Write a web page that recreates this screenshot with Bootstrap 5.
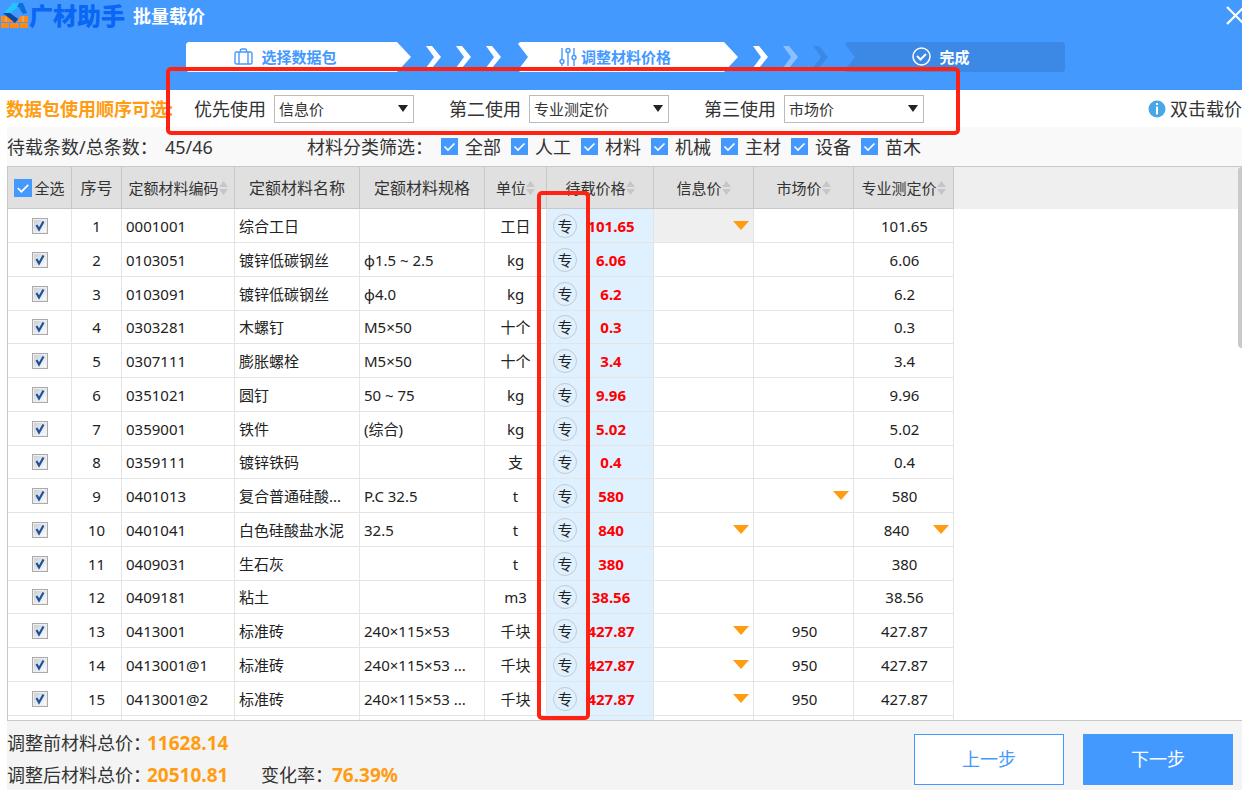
<!DOCTYPE html>
<html lang="zh-CN">
<head>
<meta charset="utf-8">
<meta name="viewport" content="width=device-width, initial-scale=1">
<title>广材助手 批量载价</title>
<link href="https://cdn.jsdelivr.net/npm/bootstrap@5.3.0/dist/css/bootstrap.min.css" rel="stylesheet">
<style>
  :root { --blue: #4499ff; --blue-dark: #3b88e5; --orange: #ff9c12; --rule: #c8c8c8; --cell: #e4e4e4; --mark-red: #ff2213; }
  body { font-family: "Noto Sans", "Noto Sans CJK SC", sans-serif; font-size: 18px; line-height: 24px; color: #333; background: #fff; }
  svg { display: block; flex: none; }

  .app-head { background: var(--blue); height: 90px; }
  .title-bar { height: 32px; padding-left: 1px; }
  .brand-name { color: #0a66f5; font-size: 24px; font-weight: 900; line-height: 28px; }
  .page-title { font-size: 18px; font-weight: 700; line-height: 30px; }
  .close-btn { width: 17px; height: 30px; }

  .steps { padding-left: 186px; margin-top: 10px; font-size: 15px; font-weight: 700; }
  .step { height: 30px; width: 220px; padding-right: 26px; background: #fff; color: var(--blue); }
  .step-first { width: 225px; clip-path: polygon(0 2px, 2px 0, 211px 0, 100% 50%, 211px 100%, 2px 100%, 0 28px); }
  .step-mid { clip-path: polygon(2px 0, 206px 0, 100% 50%, 206px 100%, 2px 100%, 0 28px, 10px 50%, 0 2px); }
  .step-last { padding-right: 28px; background: var(--blue-dark); color: #fff; clip-path: polygon(2px 0, 218px 0, 100% 2px, 100% 28px, 218px 100%, 2px 100%, 0 28px, 10px 50%, 0 2px); }
  .chevrons { width: 107px; gap: 14px; padding-right: 2px; }

  .order-bar { height: 37px; padding-left: 6px; }
  .order-title { width: 188px; color: var(--orange); font-weight: 700; white-space: nowrap; }
  .order-label { width: 80px; }
  .order-select { width: 140px; height: 28px; margin-right: 35px; padding: 0 24px 0 4px; font-size: 15px; line-height: 24px; color: #333; border: 1px solid #bbb; border-radius: 0;
    background: #fff url("data:image/svg+xml,%3Csvg xmlns='http://www.w3.org/2000/svg' viewBox='0 0 10 7'%3E%3Cpath d='M0 0h10L5 7z' fill='%23222'/%3E%3C/svg%3E") no-repeat right 5px top 9px / 10px 7px; }
  .filter-bar { height: 39px; margin-left: 7px; background: #f9f9f9; }
  .count-label { width: 158px; } .count-value { width: 142px; } .filter-label { width: 134px; }
  .filter-item { width: 70px; gap: 7px; white-space: nowrap; }
  .tick { appearance: none; flex: none; width: 17px; height: 17px; margin: 0; background: var(--blue); }
  .tick:checked { background: var(--blue) url("data:image/svg+xml,%3Csvg xmlns='http://www.w3.org/2000/svg' viewBox='0 0 17 17'%3E%3Cpath d='M3.500 8.500l3.500 3.500 6.500-6.500' fill='none' stroke='%23fff' stroke-width='1.600'/%3E%3C/svg%3E") center / 100%; }

  .outline-box { position: absolute; border: 4px solid var(--mark-red); border-radius: 5px; pointer-events: none; z-index: 3; }
  .order-outline { left: 166px; top: -23px; width: 794px; height: 68px; }
  .source-outline { left: 529px; top: 24px; width: 53px; bottom: 0; }

  .grid-area { margin-left: 7px; min-height: 0; border: solid var(--rule); border-width: 1px 0 1px 1px; overflow: hidden; }
  .price-grid { table-layout: fixed; width: 100%; border-collapse: separate; border-spacing: 0; font-size: 15px; line-height: 22px; color: #222; }
  .price-grid th { height: 42px; padding: 0; background: #e0e0e0; border-right: 1px solid var(--rule); border-bottom: 1px solid var(--rule); font-weight: 400; color: #333; text-align: center; white-space: nowrap; }
  .price-grid th.wide { font-size: 16px; }
  .price-grid td { height: 34px; padding: 0; border-right: 1px solid var(--cell); border-bottom: 1px solid var(--cell); text-align: center; white-space: nowrap; overflow: hidden; }
  .price-grid tr:nth-child(4n) td { height: 33px; }
  .price-grid .txt { text-align: left; padding-left: 4px; }
  .price-grid th.rest { background: #efefef; border: 0; }
  .price-grid td.rest { border: 0; }
  .price-grid .pending { background: #dff0ff; }
  .price-grid .active-cell { background: #efefef; }
  .price-num { color: #f00; font-weight: 700; padding-right: 8px; }
  .price-grid .assessed { padding-left: 2px; }
  .source-dot { width: 24px; height: 24px; margin-left: 6px; border: 1px solid #c4c9ce; border-radius: 50%; font-size: 15px; line-height: 22px; color: #222; }
  .row-tick { appearance: none; display: block; width: 16px; height: 16px; margin: 0 auto; border: 1px solid #aaa; box-shadow: inset 0 0 0 1px #eee; background: linear-gradient(135deg, #ccd0d6, #fff); }
  .row-tick:checked { background: url("data:image/svg+xml,%3Csvg xmlns='http://www.w3.org/2000/svg' viewBox='0 0 14 14'%3E%3Cpath d='M3.500 6l2.500 4.500 4.500-8' fill='none' stroke='%231c5299' stroke-width='2.200'/%3E%3C/svg%3E") center / 100%, linear-gradient(135deg, #c8ccd2, #fff); }
  .all-tick { width: 18px; height: 18px; margin-right: 2px; }
  .drop-btn { width: 16px; height: 22px; margin-right: 4px; }
  .scroll-thumb { position: absolute; right: 0; top: 0; width: 4px; height: 181px; background: #c9c9c9; border-radius: 4px 0 0 4px; }

  .foot { margin-left: 7px; height: 69px; padding: 10px 9px 0 0; background: #f4f4f4; }
  .sum-label { width: 140px; white-space: nowrap; }
  .sum-value { color: var(--orange); font-size: 19px; font-weight: 700; }
  .sum-first { width: 114px; } .rate-label { width: 71px; white-space: nowrap; }
  .foot-actions { gap: 19px; padding-top: 3px; }
  .step-btn { width: 150px; height: 51px; padding: 0; border: 1px solid var(--blue); border-radius: 0; font-size: 18px; }
  .btn-prev, .btn-prev:hover { background: #fff; color: var(--blue); }
  .btn-next, .btn-next:hover { background: var(--blue); color: #fff; }
</style>
</head>
<body class="d-flex flex-column vh-100 overflow-hidden">

<header class="app-head flex-shrink-0">
  <div class="title-bar d-flex align-items-center">
    <svg width="28" height="28" viewBox="0 0 28 28" aria-hidden="true">
      <path d="M0 14h7l6 6H0zM17 19l2-5h8v6H15zM0 21h8v5H0zM9 21h9v5H9zM19 21h8v5h-8z" fill="#ff8a14"/>
      <path d="M5 15v5M22 14v6" stroke="#cfc0a0" stroke-width="1" fill="none"/>
      <path d="M12 1h10L11 12H2z" fill="#21c8f7"/>
      <path d="M18 1h4l4 10-4 1-4-6-2-1z" fill="#0b6fe0"/>
      <path d="M17 5l2 1-8 7-3-1z" fill="#4499ff"/>
      <path d="M2 11h7l8 6-3 4z" fill="#0647a8"/>
    </svg>
    <span class="brand-name">广材助手</span>
    <h1 class="page-title text-white mb-0 ms-2">批量载价</h1>
    <button type="button" class="close-btn btn p-0 border-0 ms-auto overflow-hidden" aria-label="关闭">
      <svg width="20" height="20" viewBox="0 0 20 20"><path d="M2 1l17 17M19 1L2 18" stroke="#fff" stroke-width="2.200"/></svg>
    </button>
  </div>
  <ol class="steps d-flex align-items-center list-unstyled mb-0">
    <li class="step step-first d-flex align-items-center justify-content-center gap-2">
      <svg width="19" height="18" viewBox="0 0 19 18" fill="none" stroke="#4499ff" stroke-width="1.400"><rect x="1" y="4" width="17" height="12" rx="1.500"/><path d="M5 4v12M14 4v12M6.500 4V2Q6.500 1 8 1h3q1.500 0 1.500 1V4"/></svg>
      <span>选择数据包</span>
    </li>
    <li class="chevrons d-flex justify-content-center" aria-hidden="true">
      <svg width="16" height="22" viewBox="0 0 16 22"><path d="M0 0h6l9 11-9 11H0l8-11z" fill="#fff"/></svg>
      <svg width="16" height="22" viewBox="0 0 16 22"><path d="M0 0h6l9 11-9 11H0l8-11z" fill="#fff"/></svg>
      <svg width="16" height="22" viewBox="0 0 16 22"><path d="M0 0h6l9 11-9 11H0l8-11z" fill="#fff"/></svg>
    </li>
    <li class="step step-mid d-flex align-items-center justify-content-center gap-1">
      <svg width="18" height="20" viewBox="0 0 18 20" fill="none" stroke="#4499ff" stroke-width="1.400"><path d="M3 1v11M3 17v2M9 6v13M15 1v7M15 13v6"/><circle cx="3" cy="14.500" r="2"/><circle cx="9" cy="3.500" r="2"/><circle cx="15" cy="10.500" r="2"/></svg>
      <span>调整材料价格</span>
    </li>
    <li class="chevrons d-flex justify-content-center" aria-hidden="true">
      <svg width="16" height="22" viewBox="0 0 16 22"><path d="M0 0h6l9 11-9 11H0l8-11z" fill="#fff"/></svg>
      <svg width="16" height="22" viewBox="0 0 16 22"><path d="M0 0h6l9 11-9 11H0l8-11z" fill="#8cc0ff"/></svg>
      <svg width="16" height="22" viewBox="0 0 16 22"><path d="M0 0h6l9 11-9 11H0l8-11z" fill="#3b88e5"/></svg>
    </li>
    <li class="step step-last d-flex align-items-center justify-content-center gap-2">
      <svg width="19" height="20" viewBox="0 0 19 20" fill="none" stroke="#fff" stroke-width="1.500"><circle cx="9.500" cy="9.500" r="8.500"/><path d="M5 9l3.500 3.500L14 7" stroke-width="2"/></svg>
      <span>完成</span>
    </li>
  </ol>
</header>

<section class="order-bar position-relative d-flex align-items-center flex-shrink-0">
  <span class="order-title">数据包使用顺序可选:</span>
  <label class="order-label" for="first">优先使用</label>
  <select id="first" class="form-select order-select"><option>信息价</option><option>专业测定价</option><option>市场价</option></select>
  <label class="order-label" for="second">第二使用</label>
  <select id="second" class="form-select order-select"><option>专业测定价</option><option>信息价</option><option>市场价</option></select>
  <label class="order-label" for="third">第三使用</label>
  <select id="third" class="form-select order-select"><option>市场价</option><option>信息价</option><option>专业测定价</option></select>
  <span class="ms-auto d-flex align-items-center gap-1 text-nowrap">
    <svg width="18" height="18" viewBox="0 0 18 18"><circle cx="9" cy="9" r="8.500" fill="#49a6e8"/><path d="M9 3v2M9 6.500v8" stroke="#fff" stroke-width="2"/></svg>
    双击载价
  </span>
  <div class="outline-box order-outline"></div>
</section>

<section class="filter-bar d-flex align-items-center flex-shrink-0">
  <span class="count-label">待载条数/总条数：</span><span class="count-value">45/46</span>
  <span class="filter-label">材料分类筛选：</span>
  <label class="filter-item d-flex align-items-center"><input type="checkbox" class="tick" checked>全部</label>
  <label class="filter-item d-flex align-items-center"><input type="checkbox" class="tick" checked>人工</label>
  <label class="filter-item d-flex align-items-center"><input type="checkbox" class="tick" checked>材料</label>
  <label class="filter-item d-flex align-items-center"><input type="checkbox" class="tick" checked>机械</label>
  <label class="filter-item d-flex align-items-center"><input type="checkbox" class="tick" checked>主材</label>
  <label class="filter-item d-flex align-items-center"><input type="checkbox" class="tick" checked>设备</label>
  <label class="filter-item d-flex align-items-center"><input type="checkbox" class="tick" checked>苗木</label>
</section>

<main class="grid-area position-relative flex-grow-1">
  <table class="price-grid">
    <colgroup>
      <col width="64"><col width="50"><col width="113"><col width="125"><col width="125"><col width="62"><col width="107"><col width="100"><col width="100"><col width="100"><col>
    </colgroup>
    <thead>
      <tr>
        <th><label class="d-flex align-items-center justify-content-center"><input type="checkbox" class="tick all-tick" checked>全选</label></th>
        <th class="wide">序号</th>
        <th data-sort>定额材料编码</th>
        <th class="wide">定额材料名称</th>
        <th class="wide">定额材料规格</th>
        <th data-sort>单位</th>
        <th data-sort>待载价格</th>
        <th data-sort>信息价</th>
        <th data-sort>市场价</th>
        <th data-sort>专业测定价</th>
        <th class="rest"></th>
      </tr>
    </thead>
    <tbody id="rows"></tbody>
  </table>
  <div class="outline-box source-outline"></div>
  <div class="scroll-thumb"></div>
</main>

<footer class="foot d-flex flex-shrink-0">
  <div class="d-flex flex-column gap-2 flex-grow-1">
    <div class="d-flex"><span class="sum-label">调整前材料总价：</span><span class="sum-value">11628.14</span></div>
    <div class="d-flex"><span class="sum-label">调整后材料总价：</span><span class="sum-value sum-first">20510.81</span><span class="rate-label">变化率：</span><span class="sum-value">76.39%</span></div>
  </div>
  <div class="foot-actions d-flex">
    <button type="button" class="btn step-btn btn-prev">上一步</button>
    <button type="button" class="btn step-btn btn-next">下一步</button>
  </div>
</footer>

<script src="https://cdn.jsdelivr.net/npm/bootstrap@5.3.0/dist/js/bootstrap.bundle.min.js"></script>
<script>
  // code, name, spec, unit, pending price, info price, market price, assessed price; "v" marks a price list
  const items = [
    ["0001001", "综合工日", "", "工日", "101.65", "v", "", "101.65"],
    ["0103051", "镀锌低碳钢丝", "φ1.5 ~ 2.5", "kg", "6.06", "", "", "6.06"],
    ["0103091", "镀锌低碳钢丝", "φ4.0", "kg", "6.2", "", "", "6.2"],
    ["0303281", "木螺钉", "M5×50", "十个", "0.3", "", "", "0.3"],
    ["0307111", "膨胀螺栓", "M5×50", "十个", "3.4", "", "", "3.4"],
    ["0351021", "圆钉", "50 ~ 75", "kg", "9.96", "", "", "9.96"],
    ["0359001", "铁件", "(综合)", "kg", "5.02", "", "", "5.02"],
    ["0359111", "镀锌铁码", "", "支", "0.4", "", "", "0.4"],
    ["0401013", "复合普通硅酸...", "P.C 32.5", "t", "580", "", "v", "580"],
    ["0401041", "白色硅酸盐水泥", "32.5", "t", "840", "v", "", "840v"],
    ["0409031", "生石灰", "", "t", "380", "", "", "380"],
    ["0409181", "粘土", "", "m3", "38.56", "", "", "38.56"],
    ["0413001", "标准砖", "240×115×53", "千块", "427.87", "v", "950", "427.87"],
    ["0413001@1", "标准砖", "240×115×53 ...", "千块", "427.87", "v", "950", "427.87"],
    ["0413001@2", "标准砖", "240×115×53 ...", "千块", "427.87", "v", "950", "427.87"]
  ];
  const price = p => p.endsWith("v")
    ? `<div class="d-flex align-items-center"><span class="flex-grow-1 ps-1">${p.slice(0, -1)}</span><button type="button" class="drop-btn btn p-0 border-0 d-flex align-items-center" aria-label="展开"><svg width="16" height="9" viewBox="0 0 16 9"><path d="M0 0h16L8 9z" fill="#ff9c12"/></svg></button></div>`
    : p;
  const rows = items.map((r, i) => `<tr>
    <td><input type="checkbox" class="row-tick" aria-label="${r[0]}" checked></td>
    <td>${i + 1}</td><td class="txt">${r[0]}</td><td class="txt">${r[1]}</td><td class="txt">${r[2]}</td><td>${r[3]}</td>
    <td class="pending"><div class="d-flex align-items-center"><span class="source-dot">专</span><span class="price-num flex-grow-1">${r[4]}</span></div></td>
    <td class="${i ? "" : "active-cell"}">${price(r[5])}</td><td class="assessed">${price(r[6])}</td><td class="assessed">${price(r[7])}</td><td class="rest"></td></tr>`);
  rows.push(`<tr>${"<td></td>".repeat(6)}<td class="pending"></td>${"<td></td>".repeat(3)}<td class="rest"></td></tr>`);
  document.getElementById("rows").innerHTML = rows.join("");
  document.querySelectorAll("[data-sort]").forEach(th => {
    th.innerHTML = `<span class="d-flex align-items-center justify-content-center">${th.textContent.trim()}<svg width="9" height="14" viewBox="0 0 9 14"><path d="M0 6l4.500-6L9 6zM0 8h9l-4.500 6z" fill="#c6c6c6"/></svg></span>`;
  });
</script>
</body>
</html>
